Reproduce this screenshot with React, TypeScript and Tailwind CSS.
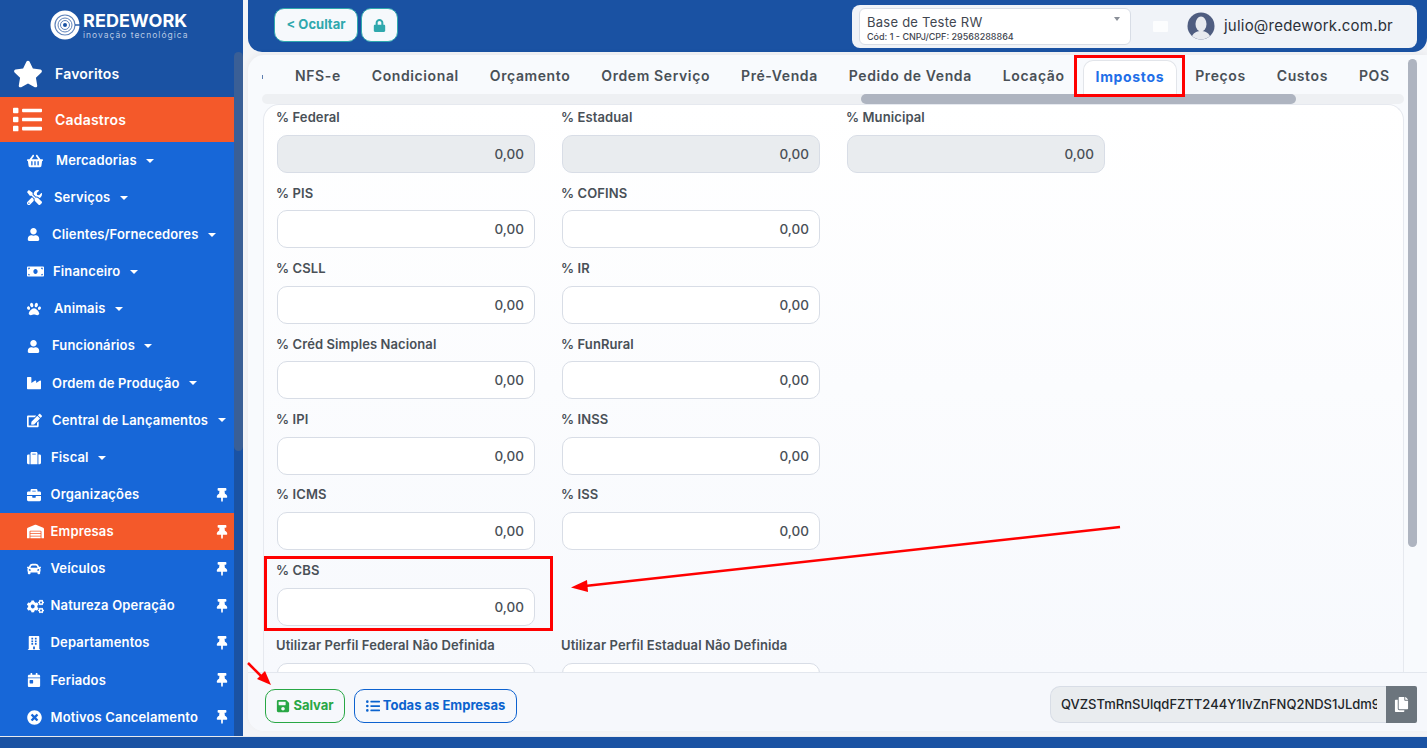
import { FaBriefcase, FaBuilding, FaCalendarDay, FaCar, FaCogs, FaCopy, FaEdit, FaIndustry, FaList, FaListUl, FaLock, FaMoneyBill, FaPaw, FaSave, FaShoppingBasket, FaStar, FaSuitcase, FaThumbtack, FaTimesCircle, FaTools, FaUser, FaWarehouse } from "react-icons/fa"

const menu = [
  { label: "Mercadorias", icon: FaShoppingBasket, size: 16, text: "ml-[29px]", caret: true },
  { label: "Serviços", icon: FaTools, size: 15, text: "ml-[27px]", caret: true },
  { label: "Clientes/Fornecedores", icon: FaUser, size: 13, text: "ml-[25px]", caret: true },
  { label: "Financeiro", icon: FaMoneyBill, size: 17, text: "ml-[26px]", caret: true },
  { label: "Animais", icon: FaPaw, size: 14, text: "ml-[27px]", caret: true },
  { label: "Funcionários", icon: FaUser, size: 13, text: "ml-[25px]", caret: true },
  { label: "Ordem de Produção", icon: FaIndustry, size: 14, text: "ml-[25px]", caret: true },
  { label: "Central de Lançamentos", icon: FaEdit, size: 15, text: "ml-[25px]", caret: true },
  { label: "Fiscal", icon: FaSuitcase, size: 14, text: "ml-[24px]", caret: true },
  { label: "Organizações", icon: FaBriefcase, size: 14, text: "ml-[23.5px]" },
  { label: "Empresas", icon: FaWarehouse, size: 17, text: "ml-[23.5px]", active: true },
  { label: "Veículos", icon: FaCar, size: 14, text: "ml-[23.5px]" },
  { label: "Natureza Operação", icon: FaCogs, size: 17, text: "ml-[23.5px]" },
  { label: "Departamentos", icon: FaBuilding, size: 14, text: "ml-[23.5px]" },
  { label: "Feriados", icon: FaCalendarDay, size: 14, text: "ml-[23.5px]" },
  { label: "Motivos Cancelamento", icon: FaTimesCircle, size: 15, text: "ml-[23.5px]" },
]

const tabs = ["NFS-e", "Condicional", "Orçamento", "Ordem Serviço", "Pré-Venda", "Pedido de Venda", "Locação", "Impostos", "Preços", "Custos", "POS"]

const fields = [
  { label: "% Federal", off: true },
  { label: "% Estadual", off: true },
  { label: "% Municipal", off: true },
  { label: "% PIS" },
  { label: "% COFINS" },
  null,
  { label: "% CSLL" },
  { label: "% IR" },
  null,
  { label: "% Créd Simples Nacional" },
  { label: "% FunRural" },
  null,
  { label: "% IPI" },
  { label: "% INSS" },
  null,
  { label: "% ICMS" },
  { label: "% ISS" },
  null,
  { label: "% CBS" },
  null,
  null,
  { label: "Utilizar Perfil Federal Não Definida", empty: true },
  { label: "Utilizar Perfil Estadual Não Definida", empty: true },
  null,
]

function Logo() {
  return (
    <div className="h-[50px] flex items-center pl-[50px]">
      <svg width="32" height="30" viewBox="0 0 32 30" className="shrink-0">
        <circle cx="15" cy="15" r="14.5" fill="#fff" />
        <circle cx="15" cy="15" r="10" fill="none" stroke="#5f83ba" strokeWidth="1.2" />
        <circle cx="15" cy="15" r="7" fill="none" stroke="#5f83ba" strokeWidth="1" />
        <circle cx="15" cy="15" r="4.5" fill="none" stroke="#5f83ba" strokeWidth="1" />
        <circle cx="15" cy="15" r="2" fill="#1a52a3" />
        <path d="M25 15h6" stroke="#1a52a3" strokeWidth="1.4" />
      </svg>
      <div className="ml-[1px]">
        <div className="text-[18px] leading-[19px] font-bold text-white tracking-[0.1px]">REDEWORK</div>
        <div className="text-[8.5px] leading-[10px] text-[#b8c9e4] tracking-[1px] whitespace-nowrap">inovação tecnológica</div>
      </div>
    </div>
  )
}

function Sidebar() {
  return (
    <aside className="w-[243px] shrink-0 h-full bg-[#1a52a3] flex flex-col">
      <Logo />
      <div className="flex flex-1 min-h-0">
        <nav className="w-[234px] shrink-0 flex flex-col">
          <div className="h-[48px] flex items-center pl-[13px] text-white">
            <FaStar size={30} />
            <span className="ml-[12px] text-[14px] font-semibold tracking-[0.2px]">Favoritos</span>
          </div>
          <div className="h-[45px] flex items-center pl-[13px] text-white bg-[#f4592a]">
            <FaList size={29} />
            <span className="ml-[13px] text-[14px] font-semibold tracking-[0.2px]">Cadastros</span>
          </div>
          <div className="flex-1 bg-[#1767d8]">
            {menu.map((item) => {
              const Icon = item.icon
              return (
                <div key={item.label} className={`h-[37.13px] flex items-center pl-[27px] pr-[5px] text-white ${item.active ? "bg-[#f4592a]" : ""}`}>
                  <span className="w-0 flex items-center"><Icon size={item.size} className="shrink-0" /></span>
                  <span className={`${item.text} text-[13px] font-semibold tracking-[0.15px] whitespace-nowrap`}>{item.label}</span>
                  {item.caret ? (
                    <span className="ml-[9.5px] w-0 h-0 border-x-[4px] border-x-transparent border-t-[4px] border-t-white" />
                  ) : (
                    <FaThumbtack size={14} className="ml-auto" />
                  )}
                </div>
              )
            })}
          </div>
        </nav>
        <div className="flex-1 pt-[2px]">
          <div className="h-[399px] bg-[#3a5f96] rounded-[5px]" />
        </div>
      </div>
    </aside>
  )
}

function Header() {
  return (
    <header className="h-[52px] shrink-0 bg-[#1a52a3] rounded-b-[14px] flex items-center pl-[26px] pr-[10px]">
      <button className="w-[84px] h-[34px] rounded-[10px] border border-[#2fa8ad] bg-[#f6f9fc] text-[#2fa8ad] text-[13px] font-bold -mt-[2px]">&lt; Ocultar</button>
      <button className="w-[37px] h-[34px] ml-[3px] rounded-[10px] border border-[#2fa8ad] bg-[#f6f9fc] text-[#2fa8ad] flex items-center justify-center -mt-[2px]">
        <FaLock size={13} />
      </button>
      <div className="ml-auto w-[565px] h-[43px] rounded-[8px] bg-[#f0f3f8] flex items-center pl-[7px]">
        <div className="relative w-[272px] h-[37px] rounded-[6px] border border-[#d8dde6] bg-white pl-[7px] pt-[5px]">
          <div className="text-[13px] leading-[16px] tracking-[0.25px] text-[#3f4650]">Base de Teste RW</div>
          <div className="text-[9px] leading-[11px] mt-[1px] text-[#3f4650] font-medium">Cód: 1 - CNPJ/CPF: 29568288864</div>
          <span className="absolute right-[10px] top-[8px] w-0 h-0 border-x-[3px] border-x-transparent border-t-[4px] border-t-[#8a8f98]" />
        </div>
        <div className="ml-[22px] w-[15px] h-[11px] bg-white/80 rounded-[1px]" />
        <svg width="28" height="28" viewBox="0 0 28 28" className="ml-[19px]">
          <circle cx="14" cy="14" r="13.5" fill="#4f5d80" />
          <ellipse cx="14" cy="12" rx="5.5" ry="7.5" fill="#e8eaef" />
          <path d="M5 24c2-4 6-5 9-5s7 1 9 5a13.5 13.5 0 0 1-18 0z" fill="#e8eaef" />
        </svg>
        <span className="ml-[9px] text-[15px] tracking-[0.22px] text-[#2b3038] whitespace-nowrap">julio@redework.com.br</span>
      </div>
    </header>
  )
}

function Tabs() {
  return (
    <div className="h-[39px] flex items-end pl-[14px] overflow-hidden">
      <div className="self-center w-[1px] h-[4px] mt-[4px] bg-[#5f7fb0]" />
      <div className="w-[16.5px] shrink-0" />
      {tabs.map((tab) =>
        tab === "Impostos" ? (
          <div key={tab} className="h-[34px] px-[12px] mx-[2.5px] pb-[3px] flex items-center rounded-t-[10px] border border-b-0 border-[#e2e5ea] bg-white text-[14px] font-bold tracking-[0.65px] text-[#1f6fe8] whitespace-nowrap">
            {tab}
          </div>
        ) : (
          <div key={tab} className="h-[34px] px-[15.5px] pb-[3px] flex items-center text-[14px] font-semibold text-[#495057] tracking-[0.6px] whitespace-nowrap">
            {tab}
          </div>
        ),
      )}
    </div>
  )
}

function Form() {
  return (
    <div className="flex-1 min-h-0 overflow-hidden rounded-t-[16px] border border-b-0 border-[#e6e9ef] bg-gradient-to-b from-white to-[#f7f9fd] ml-[15px] mr-[23px] pl-[13px] pt-[2px]">
      <div className="grid grid-cols-[258px_258px_258px] gap-x-[27px] auto-rows-[75.43px]">
        {fields.map((field, i) =>
          field ? (
            <div key={i}>
              <div className="h-[22px] -ml-[1px] flex items-center text-[13px] font-semibold tracking-[0.1px] text-[#495057] whitespace-nowrap">{field.label}</div>
              <input
                readOnly
                value={field.empty ? "" : "0,00"}
                className={`mt-[6px] w-full h-[38px] rounded-[10px] border border-[#d8dde6] pr-[10px] text-right text-[13.5px] font-medium text-[#495057] ${field.off ? "bg-[#e9ecef]" : "bg-white"}`}
              />
            </div>
          ) : (
            <div key={i} />
          ),
        )}
      </div>
    </div>
  )
}

function Footer() {
  return (
    <footer className="h-[59px] shrink-0 border-t border-[#e3e7ee] bg-[#f6f8fc] rounded-bl-[16px] flex items-center pl-[17px] pr-[10px]">
      <button className="w-[80px] h-[34px] mt-[8px] rounded-[10px] border border-[#28a745] flex items-center justify-center gap-[3px] text-[13px] font-bold text-[#28a745]">
        <FaSave size={14} />
        Salvar
      </button>
      <button className="w-[163px] h-[34px] mt-[8px] ml-[9px] rounded-[10px] border border-[#0d62d0] flex items-center justify-center gap-[3px] text-[13px] font-bold text-[#0b63ce]">
        <FaListUl size={14} />
        Todas as Empresas
      </button>
      <div className="ml-auto w-[367px] h-[37px] mt-[5px] flex">
        <div className="flex-1 min-w-0 rounded-l-[10px] border border-r-0 border-[#d8dde6] bg-[#e9ecef] pl-[10px] pr-[9px] flex items-center">
          <span className="block overflow-hidden whitespace-nowrap text-[13px] font-medium text-[#212529]">QVZSTmRnSUlqdFZTT244Y1IvZnFNQ2NDS1JLdm9</span>
        </div>
        <div className="w-[31px] bg-[#6c757d] rounded-r-[2px] flex items-center justify-center text-white">
          <FaCopy size={15} />
        </div>
      </div>
    </footer>
  )
}

export default function App() {
  return (
    <div className="relative w-[1427px] h-[748px] overflow-hidden flex flex-col bg-[#1a52a3] font-['Inter',sans-serif]">
      <div className="h-[736px] shrink-0 flex">
        <Sidebar />
        <main className="flex-1 min-w-0 h-full flex flex-col pl-[5px] bg-[#f3f4f7]">
          <Header />
          <div className="relative mt-[3px] h-[676px] rounded-tl-[16px] rounded-bl-[16px] bg-[#f8fafd] shadow-[0_-2px_6px_rgba(0,0,0,0.04)] flex flex-col">
            <Tabs />
            <div className="h-[10px] shrink-0 ml-[14px] mr-[23px] rounded-[5px] bg-[#eef0f3] relative">
              <div className="absolute left-[599px] w-[435px] h-full rounded-[5px] bg-[#aeb4c0]" />
            </div>
            <Form />
            <Footer />
            <div className="absolute right-[10px] top-[4px] w-[9px] h-[488px] rounded-[5px] bg-[#aeb4c0]" />
          </div>
        </main>
      </div>
      <div className="h-px shrink-0 bg-[#e8ebf0]" />
      {/* red marks drawn on top of the screenshot */}
      <div className="absolute left-[1074px] top-[55px] w-[111px] h-[42px] border-[3px] border-[#ff0000]" />
      <div className="absolute left-[264px] top-[556px] w-[289px] h-[75px] border-[3px] border-[#ff0000]" />
      <svg className="absolute left-0 top-0 pointer-events-none" width="1427" height="748">
        <path d="M1120 527L585 586" stroke="#f00" strokeWidth="2.5" />
        <path d="M571 587.5L587 580L588 592z" fill="#f00" />
        <path d="M248 663L264 679" stroke="#f00" strokeWidth="2.5" />
        <path d="M271 685L257 679L265 671z" fill="#f00" />
      </svg>
    </div>
  )
}
